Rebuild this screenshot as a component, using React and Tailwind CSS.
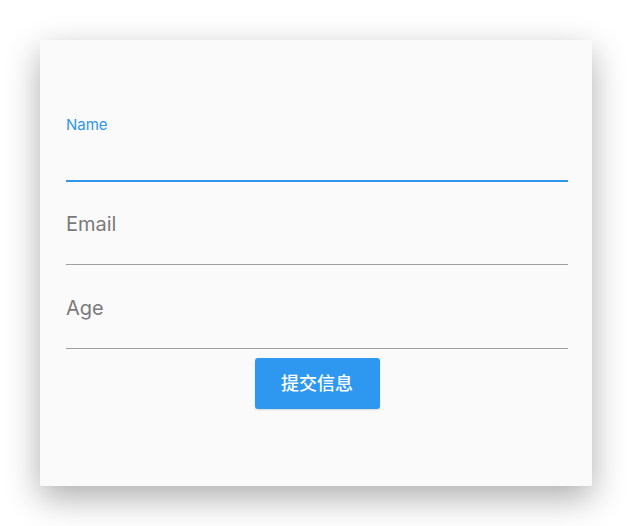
import { useState } from 'react';

const font = { fontFamily: 'Inter, "Noto Sans CJK SC", sans-serif' };

const App = () => {
    const [form, setForm] = useState({ name: '', email: '', age: '' });

    const update = (key) => (e) => setForm({ ...form, [key]: e.target.value });

    return (
        <div className="w-[632px] h-[526px] bg-white pt-[40px] pl-[40px]" style={font}>
            <div className="w-[552px] h-[446px] bg-[#fafafa] shadow-[0_12px_32px_rgba(0,0,0,0.32)] pl-[26px] pr-[24px] pt-[77px] flex flex-col">
                {/* Name - focused */}
                <div className="flex flex-col border-b-2 border-[#2f96ea]">
                    <label className="text-[15px] leading-[16px] text-[#2f96ea]">Name</label>
                    <input
                        value={form.name}
                        onChange={update('name')}
                        className="h-[47px] bg-transparent outline-none text-[20px] text-[#333]"
                    />
                </div>

                {/* Email */}
                <div className="flex flex-col border-b border-[#a0a0a0] pt-[30px] pb-[28px]">
                    <input
                        value={form.email}
                        onChange={update('email')}
                        placeholder="Email"
                        className="h-[24px] leading-[24px] bg-transparent outline-none text-[20px] text-[#333] placeholder:text-[#7a7a7a]"
                    />
                </div>

                {/* Age */}
                <div className="flex flex-col border-b border-[#a0a0a0] pt-[31px] pb-[28px]">
                    <input
                        value={form.age}
                        onChange={update('age')}
                        placeholder="Age"
                        className="h-[24px] leading-[24px] bg-transparent outline-none text-[20px] text-[#333] placeholder:text-[#7a7a7a]"
                    />
                </div>

                <div className="flex justify-center mt-[9px]">
                    <button className="w-[125px] h-[51px] rounded-[3px] bg-[#2e98f0] text-white text-[18px] font-medium shadow-[0_1px_2px_rgba(0,0,0,0.15)]">
                        提交信息
                    </button>
                </div>
            </div>
        </div>
    );
};

export default App;
